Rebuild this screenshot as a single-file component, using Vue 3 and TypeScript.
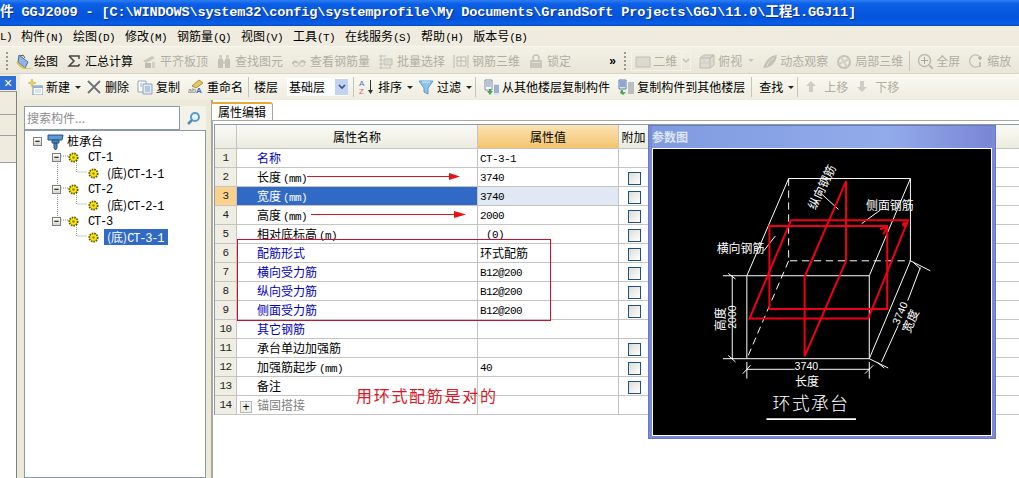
<script setup lang="ts">
interface Tool {
  icon?: string
  text?: string
  off?: boolean
  caret?: boolean
  sep?: boolean
  wide?: boolean
}

interface Row {
  name: string
  unit?: string
  value?: string
  cjk?: boolean
  kind?: string
  check?: boolean
}

const icons: Record<string, string> = {
  draw: '<path d="M4 2l9 7-3 6-7-6z" fill="#8fb4e6" stroke="#4a6ea8"/><path d="M2 9c3 5 8 8 14 7" fill="none" stroke="#d9c34c" stroke-width="2"/><path d="M5 3l3-1 2 3" fill="none" stroke="#555"/>',
  sigma: '<path d="M3 3h10v3M13 13v-2M3 3l5 5-5 5h10" fill="none" stroke="#444" stroke-width="1.5"/>',
  align: '<path d="M2 8l9-5 3 2-9 5z" fill="#c9c7bb"/><path d="M4 10h6v5H4z" fill="#bdbbb0"/><path d="M11 9h3v6h-3z" fill="#d2d0c5"/>',
  find: '<path d="M2 6h5v9H2zM9 6h5v9H9z" fill="#c4c2b6"/><path d="M3 2h3v4H3zM10 2h3v4h-3zM7 8h2v3H7z" fill="#d2d0c6"/>',
  view: '<path d="M2 11c0-3 3-3 4-1M9 10c2-3 5-2 5 0" fill="none" stroke="#bdbbaf" stroke-width="2"/><circle cx="5" cy="11" r="2.5" fill="none" stroke="#c8c6ba"/><circle cx="11" cy="11" r="2.5" fill="none" stroke="#c8c6ba"/>',
  batch: '<path d="M1 3h7M1 7h4M1 11h4M1 15h12M3 2v14M12 7v8" fill="none" stroke="#c3c1b5"/><path d="M6 6h8v6H6z" fill="#dcdace" stroke="#c3c1b5"/>',
  rebar3d: '<path d="M1 2v13M15 2v13M4 4h9v9H4zM8 4v9M4 8h9" fill="none" stroke="#bdbbaf"/>',
  lock: '<path d="M5 7V5a3 3 0 0 1 6 0v2" fill="none" stroke="#c4c2b6" stroke-width="1.5"/><path d="M2 7h12v8H2z" fill="#c9c7bb"/><path d="M4 9h8v1H4z" fill="#e2e0d5"/>',
  flat: '<path d="M1 4h14v10H1z" fill="#dcdad0" stroke="#c0beb2"/>',
  top: '<path d="M1 5h10v10H1zM1 5l4-3h10l-4 3M11 5l4-3v10l-4 3" fill="#dedcd1" stroke="#bdbbaf"/><path d="M5 2v8M1 10h10" fill="none" stroke="#cfcdc2"/>',
  orbit: '<path d="M2 15c3-8 6-12 14-13-1 8-6 13-14 13z" fill="#c4c2b4"/><path d="M6 13c1-4 3-6 7-8" fill="none" stroke="#e4e2d8"/>',
  local: '<circle cx="8" cy="9" r="6" fill="none" stroke="#c4c2b6" stroke-width="2"/><path d="M5 4l6 10M3 11l10-5" stroke="#d2d0c6" stroke-width="2"/>',
  full: '<circle cx="7.500" cy="7.500" r="6" fill="#ecebe1" stroke="#bdbbaf" stroke-width="1.500"/><path d="M7.500 4v7M4 7.500h7" stroke="#a9a79b"/><path d="M12 12l4 4" stroke="#bdbbaf" stroke-width="2"/>',
  zoom: '<path d="M11 3a6 6 0 1 0 0 10" fill="none" stroke="#c4c2b6" stroke-width="1.500"/><path d="M12 3v4M10 5h4M12 9v5" stroke="#b4b2a6" stroke-width="1.500"/>',
  create: '<path d="M1 4l3-1 1-3 1 3 3 1-3 1-1 3-1-3z" fill="#f0d060" stroke="#c8a030" stroke-width=".5"/><path d="M6 7h10v9H6z" fill="#fff" stroke="#7c93b8"/><path d="M6 7h10v2H6z" fill="#8db0dd"/><path d="M8 11h6M8 13h6" stroke="#b9c6da"/>',
  remove: '<path d="M2 2l12 12M14 2L2 14" stroke="#6f7378" stroke-width="1.800"/>',
  copy: '<path d="M1 2h8v11H1z" fill="#fff" stroke="#8fa3c0"/><path d="M6 5h9v10H6z" fill="#dfe8f6" stroke="#8fa3c0"/><path d="M8 8h5M8 10h5M8 12h5M3 5h2M3 7h2" stroke="#8fa3c0"/>',
  rename: '<path d="M4 7l7-6 4 3-7 5z" fill="#e8c860" stroke="#a89040"/><text x="0" y="14" font-size="7" fill="#777" font-family="Liberation Sans">ab</text><text x="8" y="14" font-size="8" font-weight="700" fill="#3b66b0" font-family="Liberation Sans">A</text>',
  sort: '<text x="0" y="7" font-size="8" fill="#4a76c0" font-family="Liberation Sans">A</text><text x="0" y="15" font-size="8" fill="#c86a70" font-family="Liberation Sans">Z</text><path d="M11.500 1v12" stroke="#333"/><path d="M9 11l2.500 4 2.500-4z" fill="#333"/>',
  filter: '<path d="M1 2h14l-5 7v6l-4-2V9z" fill="#8cc4ea" stroke="#5f9cc8"/><path d="M4 3h8" stroke="#d8eef9"/>',
  from: '<path d="M2 1h7v10H2z" fill="#fff" stroke="#7f8c9c"/><path d="M3 3h5M3 5h5M3 7h5" stroke="#6f86b0"/><path d="M4 12h2v-2h2v2h2l-3 4z" fill="#4aa84e"/><path d="M11 5h5v11h-5z" fill="#dbe4f2"/><path d="M11 7h5M11 9h5M11 11h5M11 13h5" stroke="#5a7fb4"/>',
  to: '<path d="M1 1h7v9H1z" fill="#dbe4f2" stroke="#5a7fb4"/><path d="M2 3h5M2 5h5M2 7h5" stroke="#3f66ae"/><path d="M3 11h2v2h3l-3 3-3-2z" fill="#4aa84e"/><path d="M10 4h6M10 6h6M10 8h6M10 10h6M10 12h6M10 14h6" stroke="#7f8c9c"/>',
  up: '<path d="M6 2l5 5H8v6H4V7H1z" fill="#cfcdc2"/>',
  down: '<path d="M4 2h4v6h3l-5 5-5-5h3z" fill="#cfcdc2"/>',
  pile: '<path d="M1 2h15l-1 5H1z" fill="#5b9bd8" stroke="#24507e"/><path d="M5 7h7v3H5zM7 10h3v5l-1.500 2L7 15z" fill="#4f86c4" stroke="#24507e"/>',
}

const menus = [
  ['构件', 'N'], ['绘图', 'D'], ['修改', 'M'], ['钢筋量', 'Q'], ['视图', 'V'],
  ['工具', 'T'], ['在线服务', 'S'], ['帮助', 'H'], ['版本号', 'B'],
]

const toolsA: Tool[] = [
  { icon: 'draw', text: '绘图' },
  { icon: 'sigma', text: '汇总计算' },
  { icon: 'align', text: '平齐板顶', off: true },
  { icon: 'find', text: '查找图元', off: true },
  { icon: 'view', text: '查看钢筋量', off: true },
  { icon: 'batch', text: '批量选择', off: true },
  { icon: 'rebar3d', text: '钢筋三维', off: true },
  { icon: 'lock', text: '锁定', off: true },
]

const toolsB: Tool[] = [
  { icon: 'top', text: '俯视', off: true, caret: true },
  { icon: 'orbit', text: '动态观察', off: true },
  { icon: 'local', text: '局部三维', off: true },
  { sep: true, wide: true },
  { icon: 'full', text: '全屏', off: true },
  { icon: 'zoom', text: '缩放', off: true },
]

const toolsC: Tool[] = [
  { icon: 'create', text: '新建', caret: true },
  { icon: 'remove', text: '删除' },
  { icon: 'copy', text: '复制' },
  { icon: 'rename', text: '重命名' },
  { sep: true },
]

const toolsD: Tool[] = [
  { sep: true },
  { icon: 'sort', text: '排序', caret: true },
  { icon: 'filter', text: '过滤', caret: true },
  { sep: true, wide: true },
  { icon: 'from', text: '从其他楼层复制构件' },
  { icon: 'to', text: '复制构件到其他楼层' },
  { sep: true, wide: true },
  { text: '查找', caret: true },
  { sep: true, wide: true },
  { icon: 'up', text: '上移', off: true },
  { icon: 'down', text: '下移', off: true },
]

const tree = [
  { label: 'CT-1', child: 'CT-1-1', active: false },
  { label: 'CT-2', child: 'CT-2-1', active: false },
  { label: 'CT-3', child: 'CT-3-1', active: true },
]

const rows: Row[] = [
  { name: '名称', value: 'CT-3-1', kind: 'link' },
  { name: '长度', unit: '(mm)', value: '3740', check: true },
  { name: '宽度', unit: '(mm)', value: '3740', kind: 'picked', check: true },
  { name: '高度', unit: '(mm)', value: '2000', check: true },
  { name: '相对底标高', unit: '(m)', value: ' (0)', check: true },
  { name: '配筋形式', value: '环式配筋', cjk: true, kind: 'link', check: true },
  { name: '横向受力筋', value: 'B12@200', kind: 'link', check: true },
  { name: '纵向受力筋', value: 'B12@200', kind: 'link', check: true },
  { name: '侧面受力筋', value: 'B12@200', kind: 'link', check: true },
  { name: '其它钢筋', kind: 'link' },
  { name: '承台单边加强筋', check: true },
  { name: '加强筋起步', unit: '(mm)', value: '40', check: true },
  { name: '备注', check: true },
  { name: '锚固搭接', kind: 'folded' },
]
</script>

<template>
  <div class="app">
    <div class="titlebar">件 GGJ2009 - [C:\WINDOWS\system32\config\systemprofile\My Documents\GrandSoft Projects\GGJ\11.0\工程1.GGJ11]</div>

    <div class="menubar">
      <span class="menu-cut lt">L)</span>
      <span v-for="m in menus" :key="m[0]" class="menu-item">{{ m[0] }}<span class="lt">({{ m[1] }})</span></span>
    </div>

    <div class="toolbar top-bar">
      <i class="grip"></i>
      <template v-for="t in toolsA" :key="t.text">
        <span class="tool" :class="{ off: t.off }">
          <svg class="ico" viewBox="0 0 16 16" v-html="icons[t.icon!]"></svg>{{ t.text }}
        </span>
      </template>
      <span class="more">»</span>
      <i class="grip"></i>
      <span class="combo-off">
        <svg class="ico" viewBox="0 0 16 16" v-html="icons.flat"></svg>二维
        <span class="combo-off-btn">
          <svg width="8" height="6" viewBox="0 0 8 6"><path d="M1 1l3 3 3-3" fill="none" stroke="#c4c2b6" stroke-width="1.500"/></svg>
        </span>
      </span>
      <template v-for="(t, i) in toolsB" :key="i">
        <i v-if="t.sep" class="sep" :class="{ wide: t.wide }"></i>
        <span v-else class="tool" :class="{ off: t.off }">
          <svg class="ico" viewBox="0 0 16 16" v-html="icons[t.icon!]"></svg>{{ t.text }}<i v-if="t.caret" class="caret"></i>
        </span>
      </template>
    </div>

    <div class="second-row">
      <div class="dock-head">
        <span class="dock-close">×</span>
        <span class="dock-line"></span>
      </div>
      <div class="toolbar sub-bar">
        <template v-for="(t, i) in toolsC" :key="i">
          <i v-if="t.sep" class="sep"></i>
          <span v-else class="tool">
            <svg class="ico" viewBox="0 0 16 16" v-html="icons[t.icon!]"></svg>{{ t.text }}<i v-if="t.caret" class="caret"></i>
          </span>
        </template>
        <span class="floor-label">楼层</span>
        <span class="combo">
          基础层
          <span class="combo-btn">
            <svg width="8" height="6" viewBox="0 0 8 6"><path d="M1 1l3 3 3-3" fill="none" stroke="#2f4f8f" stroke-width="1.600"/></svg>
          </span>
        </span>
        <template v-for="(t, i) in toolsD" :key="i">
          <i v-if="t.sep" class="sep" :class="{ wide: t.wide }"></i>
          <span v-else class="tool" :class="{ off: t.off }">
            <svg v-if="t.icon" class="ico" viewBox="0 0 16 16" v-html="icons[t.icon]"></svg>{{ t.text }}<i v-if="t.caret" class="caret"></i>
          </span>
        </template>
      </div>
    </div>

    <div class="body">
      <div class="dock">
        <div class="dock-row first"></div>
        <div class="dock-row second"></div>
        <div class="dock-row third"></div>
      </div>

      <div class="side">
        <div class="search">
          <span class="search-input">搜索构件...</span>
          <span class="search-btn">
            <svg width="15" height="15" viewBox="0 0 15 15">
              <circle cx="9" cy="6" r="4" fill="#eaf4fb" stroke="#5a9cc8" stroke-width="2"/>
              <path d="M6 9l-4 4" stroke="#4a8cbc" stroke-width="2.500"/>
            </svg>
          </span>
        </div>
        <div class="tree">
          <svg class="tree-lines" width="90" height="120" viewBox="0 0 90 120">
            <path d="M56.500 32v64M60 27h8M75.500 32v11h11M60 59h8M75.500 64v11h11M60 91h8M75.500 96v11h11" fill="none" stroke="#999" stroke-dasharray="1 1"/>
          </svg>
          <div class="tree-row root">
            <span class="expander">−</span>
            <svg class="pile" width="17" height="17" viewBox="0 0 17 17" v-html="icons.pile"></svg>
            <span>桩承台</span>
          </div>
          <template v-for="n in tree" :key="n.label">
            <div class="tree-row parent">
              <span class="expander">−</span>
              <svg class="gear" width="11" height="11" viewBox="0 0 11 11">
                <circle cx="5.500" cy="5.500" r="4.200" fill="#ffe800" stroke="#5a5a10" stroke-width="1.800" stroke-dasharray="1.600 .9"/>
                <circle cx="5.500" cy="5.500" r="1.300" fill="#8a8420"/>
              </svg>
              <span class="lt tree-label">{{ n.label }}</span>
            </div>
            <div class="tree-row leaf">
              <svg class="gear" width="11" height="11" viewBox="0 0 11 11">
                <circle cx="5.500" cy="5.500" r="4.200" fill="#ffe800" stroke="#5a5a10" stroke-width="1.800" stroke-dasharray="1.600 .9"/>
                <circle cx="5.500" cy="5.500" r="1.300" fill="#8a8420"/>
              </svg>
              <span class="leaf-label" :class="{ active: n.active }">(底)<span class="lt">{{ n.child }}</span></span>
            </div>
          </template>
        </div>
      </div>

      <div class="main">
        <div class="tabs"><span class="tab">属性编辑</span></div>
        <div class="grid">
          <div class="row head">
            <span class="no"></span>
            <span class="name">属性名称</span>
            <span class="val">属性值</span>
            <span class="extra">附加</span>
          </div>
          <div v-for="(r, i) in rows" :key="r.name" class="row" :class="r.kind">
            <span class="no lt">{{ i + 1 }}</span>
            <span class="name">
              <span v-if="r.kind === 'folded'" class="plus">+</span>{{ r.name }}<span v-if="r.unit" class="lt unit">{{ r.unit }}</span>
            </span>
            <span class="val" :class="{ lt: !r.cjk }">{{ r.value }}</span>
            <span class="extra"><i v-if="r.check" class="check"></i></span>
          </div>
        </div>

        <!-- annotations drawn over the grid -->
        <svg class="arrows" width="260" height="60" viewBox="0 0 260 60">
          <path d="M1 6.500h145M5 44.500h150" stroke="#d81820"/>
          <path d="M143 3l11 3.500-11 3.500zM148 41l12 3.500-12 3.500z" fill="#e81010"/>
        </svg>
        <div class="red-box"></div>
        <div class="note">用环式配筋是对的</div>
      </div>

      <div class="param">
        <div class="param-title">参数图</div>
        <svg class="drawing" viewBox="23 83 1015 862">
          <g fill="none" stroke="#fff" stroke-width="3">
            <path d="M304 465h369v250H304zM304 465L430 172h367v248L673 715M673 465L797 172"/>
            <path d="M430 172v248h367M430 420L304 715" stroke-dasharray="22 14"/>
            <path d="M580 265L520 210M650 308l55-40M355 390l35-45"/>
            <path d="M260 465v250M232 465h72M232 715h72M248 458l22 17M248 705l22 20"/>
            <path d="M304 725v50M673 725v50M304 747h144M522 747h151M292 760l23-25M660 760l25-25"/>
            <path d="M797 420l60 30M673 715l57 28M827 440l-38 100M760 615l-50 110M806 425l22 20M696 725l22 18"/>
          </g>
          <g fill="none" stroke="#f00018" stroke-width="6">
            <path d="M372 315h355v250H372z"/>
            <path d="M437 298h353L670 594H312z"/>
            <path d="M603 180v240L478 708V468z"/>
            <path d="M705 325l20-7M715 340l10-18"/>
          </g>
          <circle cx="780" cy="310" r="8" fill="#f00018"/>
          <g class="cad-text">
            <text x="213" y="396">横向钢筋</text>
            <text x="663" y="268">侧面钢筋</text>
            <text transform="translate(510 268) rotate(-64)">纵向钢筋</text>
            <text transform="translate(238 632) rotate(-90)">高度</text>
            <text class="cad-num" transform="translate(272 625) rotate(-90)">2000</text>
            <text class="cad-num" x="448" y="750">3740</text>
            <text x="449" y="796">长度</text>
            <text class="cad-num" transform="translate(762 615) rotate(-67)">3740</text>
            <text transform="translate(795 640) rotate(-67)">宽度</text>
            <text class="cad-title" x="381" y="870">环式承台</text>
          </g>
          <path d="M363 897h270" stroke="#fff" stroke-width="5"/>
        </svg>
      </div>
    </div>
  </div>
</template>

<style scoped>
.app {
  position: relative;
  width: 1019px;
  height: 478px;
  overflow: hidden;
  background: #fff;
  color: #000;
  font: 12px/16px "Noto Sans CJK SC", sans-serif;
}

.lt {
  font-family: "Liberation Mono", "Noto Sans CJK SC", monospace;
  font-size: 11px;
  letter-spacing: -0.6px;
}

.titlebar {
  height: 26px;
  box-sizing: border-box;
  padding-top: 4px;
  background: linear-gradient(#2f7df2 0, #0a5fe4 4px, #0453dc 18px, #0a5ee6 24px, #0648b8 26px);
  color: #fff;
  font: 700 13.6px/18px "Liberation Mono", "Noto Sans CJK SC", monospace;
  letter-spacing: -0.16px;
  text-shadow: 1px 1px 0 #0a2f80;
  white-space: pre;
}

.menubar {
  display: flex;
  align-items: center;
  height: 21px;
  padding-top: 1px;
  background: #efecdf;
  border-bottom: 1px solid #f8f7f0;
  box-sizing: border-box;
}

.menu-cut {
  width: 21px;
}

.menu-item {
  margin-right: 10px;
  white-space: nowrap;
}

.menu-item .lt {
  display: inline-block;
  width: 18px;
}

.toolbar {
  display: flex;
  align-items: center;
  white-space: nowrap;
}

.toolbar > * {
  flex: none;
}

.top-bar {
  height: 27px;
  padding: 1px 0 0 6px;
  box-sizing: border-box;
  background: linear-gradient(#f3f1e6, #e9e6d8);
  border-bottom: 1px solid #d8d5c6;
}

.grip {
  width: 2px;
  height: 18px;
  margin-right: 7px;
  background: repeating-linear-gradient(#9a988c 0 2px, transparent 2px 4px);
}

.tool {
  display: inline-flex;
  align-items: center;
  gap: 3px;
  margin-right: 8px;
}

.tool.off {
  color: #b0aea2;
}

.ico {
  flex: none;
  width: 16px;
  height: 16px;
}

.caret {
  width: 0;
  height: 0;
  margin: 0 -3px 0 2px;
  border: 3px solid transparent;
  border-top: 3px solid #222;
  border-bottom: 0;
}

.tool.off .caret {
  margin: 0 -1px 0 3px;
  border-top-color: #c8c6ba;
}

.sep {
  width: 1px;
  height: 20px;
  margin: 0 5px 0 -3px;
  background: #c8c5b4;
}

.sep.wide {
  margin: 0 7px 0 -2px;
}

.more {
  margin-left: 30px;
  margin-right: 6px;
  width: 9px;
  font: 700 12px/14px "Liberation Sans", sans-serif;
}

.combo-off {
  display: inline-flex;
  align-items: center;
  gap: 2px;
  width: 60px;
  height: 20px;
  margin: 0 8px 0 -2px;
  border: 1px solid #f4f3ea;
  box-sizing: border-box;
  color: #b0aea2;
  padding-left: 3px;
}

.combo-off-btn {
  display: inline-flex;
  align-items: center;
  justify-content: center;
  width: 13px;
  height: 18px;
  margin-left: 2px;
  border-left: 1px solid #f4f3ea;
}

.second-row {
  display: flex;
  height: 26px;
  background: #efecdf;
}

.dock-head {
  flex: none;
  width: 20px;
  position: relative;
}

.dock-close {
  display: block;
  width: 16px;
  height: 14px;
  margin-top: 2px;
  background: #2f6fd6;
  color: #fff;
  font: 14px/14px "Liberation Sans", sans-serif;
  text-align: center;
}

.dock-line {
  display: block;
  width: 17px;
  height: 9px;
  margin-top: 1px;
  background: #efecdf;
  border-top: 1px solid #999;
  border-right: 1px solid #808080;
  box-sizing: border-box;
}

.sub-bar {
  flex: 1;
  padding-left: 7px;
  background: linear-gradient(#fafaf3, #efecdf);
  border-radius: 3px 0 0 0;
}

.floor-label {
  margin-right: 9px;
}

.combo {
  display: inline-flex;
  align-items: center;
  justify-content: space-between;
  width: 61px;
  height: 18px;
  margin-right: 8px;
  padding-left: 2px;
  box-sizing: border-box;
  background: #fff;
}

.combo-btn {
  display: inline-flex;
  align-items: center;
  justify-content: center;
  width: 13px;
  height: 16px;
  background: #c3d3ef;
}

.body {
  display: flex;
  height: 378px;
  background: #ece9d8;
}

.dock {
  flex: none;
  width: 16px;
  background: #fff;
  border-right: 1px solid #808080;
}

.dock-row {
  background: #efecdf;
  border-bottom: 1px solid #a0a0a0;
}

.first {
  height: 14px;
}

.second {
  height: 20px;
}

.third {
  height: 26px;
}

.side {
  flex: none;
  width: 182px;
  margin-left: 7px;
  padding-top: 6px;
  display: flex;
  flex-direction: column;
}

.search {
  display: flex;
  height: 24px;
  background: #fff;
}

.search-input {
  width: 156px;
  box-sizing: border-box;
  border: 1px solid #8a9aa8;
  padding: 3px 2px;
  color: #8c8c8c;
}

.search-btn {
  flex: 1;
  display: flex;
  align-items: center;
  justify-content: center;
  background: #f4f3ea;
}

.tree {
  flex: 1;
  position: relative;
  box-sizing: border-box;
  border: 1px solid #8a9aa8;
  background: #fff;
  padding-top: 2px;
}

.tree-lines {
  position: absolute;
  left: -24px;
  top: -2px;
}

.tree-row {
  position: relative;
  display: flex;
  align-items: center;
  height: 16px;
}

.expander {
  flex: none;
  width: 9px;
  height: 9px;
  box-sizing: border-box;
  border: 1px solid #808080;
  background: linear-gradient(#fff, #d8d5c8);
  font: 700 9px/6px "Liberation Sans", sans-serif;
  text-align: center;
}

.root {
  padding-left: 8px;
}

.pile {
  margin: 0 3px 0 5px;
}

.parent {
  padding-left: 27px;
}

.parent .gear {
  margin-left: 7px;
}

.tree-label {
  margin-left: 9px;
  padding-top: 2px;
  font-size: 12px;
  letter-spacing: -1.2px;
}

.leaf {
  padding-left: 63px;
}

.leaf-label {
  margin-left: 5px;
  padding: 0 4px 0 3px;
  height: 16px;
  width: 64px;
  box-sizing: border-box;
  white-space: nowrap;
}

.leaf-label .lt {
  font-size: 12px;
  letter-spacing: -1.2px;
}

.leaf-label.active {
  background: #316ac5;
  color: #fff;
}

.main {
  flex: 1;
  position: relative;
  min-width: 0;
  margin-left: 5px;
  background: #fff;
  border-left: 2px solid #aca899;
}

.tabs {
  height: 20px;
  border-bottom: 1px solid #aca899;
  position: relative;
}

.tab {
  position: absolute;
  left: -2px;
  top: 2px;
  width: 62px;
  height: 18px;
  box-sizing: border-box;
  background: #fff;
  border: 1px solid #aca899;
  border-top: 2px solid #e8a838;
  border-bottom: 0;
  border-radius: 3px 3px 0 0;
  text-align: center;
  line-height: 15px;
}

.grid {
  margin: 3px 0 0 1px;
  border-top: 1px solid #8a9ab0;
  border-left: 1px solid #8a9ab0;
}

.row {
  display: flex;
  height: 19px;
  box-sizing: border-box;
  border-bottom: 1px solid #c4c4c4;
  line-height: 18px;
}

.row > span {
  flex: none;
  box-sizing: border-box;
  border-right: 1px solid #c4c4c4;
  white-space: pre;
}

.no {
  width: 22px;
  background: #f0eee2;
  text-align: center;
  color: #222;
}

.name {
  width: 241px;
  padding-left: 20px;
}

.val {
  width: 141px;
  padding-left: 2px;
}

.val.lt {
  padding-top: 1px;
}

.extra {
  width: 30px;
  text-align: center;
}

.unit {
  margin-left: 2px;
}

.head {
  height: 24px;
  line-height: 23px;
  background: linear-gradient(#fafaf5, #ecebe0);
}

.head .name,
.head .val {
  text-align: center;
  padding: 0;
}

.head .no {
  background: none;
}

.head .val {
  background: linear-gradient(#fbe3b4, #f5c56e);
}

.link .name {
  color: #0000c0;
}

.folded .name {
  color: #808080;
  padding-left: 3px;
}

.plus {
  display: inline-block;
  width: 12px;
  height: 12px;
  box-sizing: border-box;
  margin-right: 5px;
  border: 1px solid #b8b8b8;
  background: #f0f0ea;
  color: #000;
  font: 12px/10px "Liberation Sans", sans-serif;
  text-align: center;
  vertical-align: -1px;
}

.picked .no {
  background: #fbd28c;
}

.picked .name {
  background: #316ac5;
  color: #fff;
}

.picked .val {
  background: #e0e8f4;
}

.picked .extra {
  background: #fff;
}

.check {
  display: block;
  width: 13px;
  height: 13px;
  box-sizing: border-box;
  margin: 4px 0 0 9px;
  border: 1px solid #1c5180;
  background: linear-gradient(135deg, #dcdcd6, #fff);
}

.arrows {
  position: absolute;
  left: 93px;
  top: 70px;
}

.red-box {
  position: absolute;
  left: 24px;
  top: 139px;
  width: 314px;
  height: 82px;
  box-sizing: border-box;
  border: 1px solid #c81030;
}

.note {
  position: absolute;
  left: 143px;
  top: 283px;
  color: #d81828;
  font-size: 16px;
  line-height: 24px;
  letter-spacing: 1.7px;
}

.param {
  position: absolute;
  left: 648px;
  top: 125px;
  width: 348px;
  height: 314px;
  box-sizing: border-box;
  padding: 0 3px 3px;
  background: #7a8ad8;
  border: 1px solid #6a78c4;
}

.param-title {
  height: 22px;
  background: linear-gradient(90deg, #7f9be0, #92abea 70%, #7a86d6);
  color: #dfe6f5;
  font-weight: 700;
  line-height: 22px;
}

.drawing {
  display: block;
  width: 340px;
  height: 288px;
  background: #000;
  border: 1px solid #fff;
  box-sizing: border-box;
}

.cad-text {
  fill: #fff;
  font-size: 36px;
}

.cad-num {
  font-family: "Liberation Sans", sans-serif;
  font-size: 32px;
}

.cad-title {
  font-size: 54px;
  font-weight: 300;
  letter-spacing: 4px;
}
</style>

<style>
html,
body {
  margin: 0;
  overflow: hidden;
  background: #fff;
}
</style>
